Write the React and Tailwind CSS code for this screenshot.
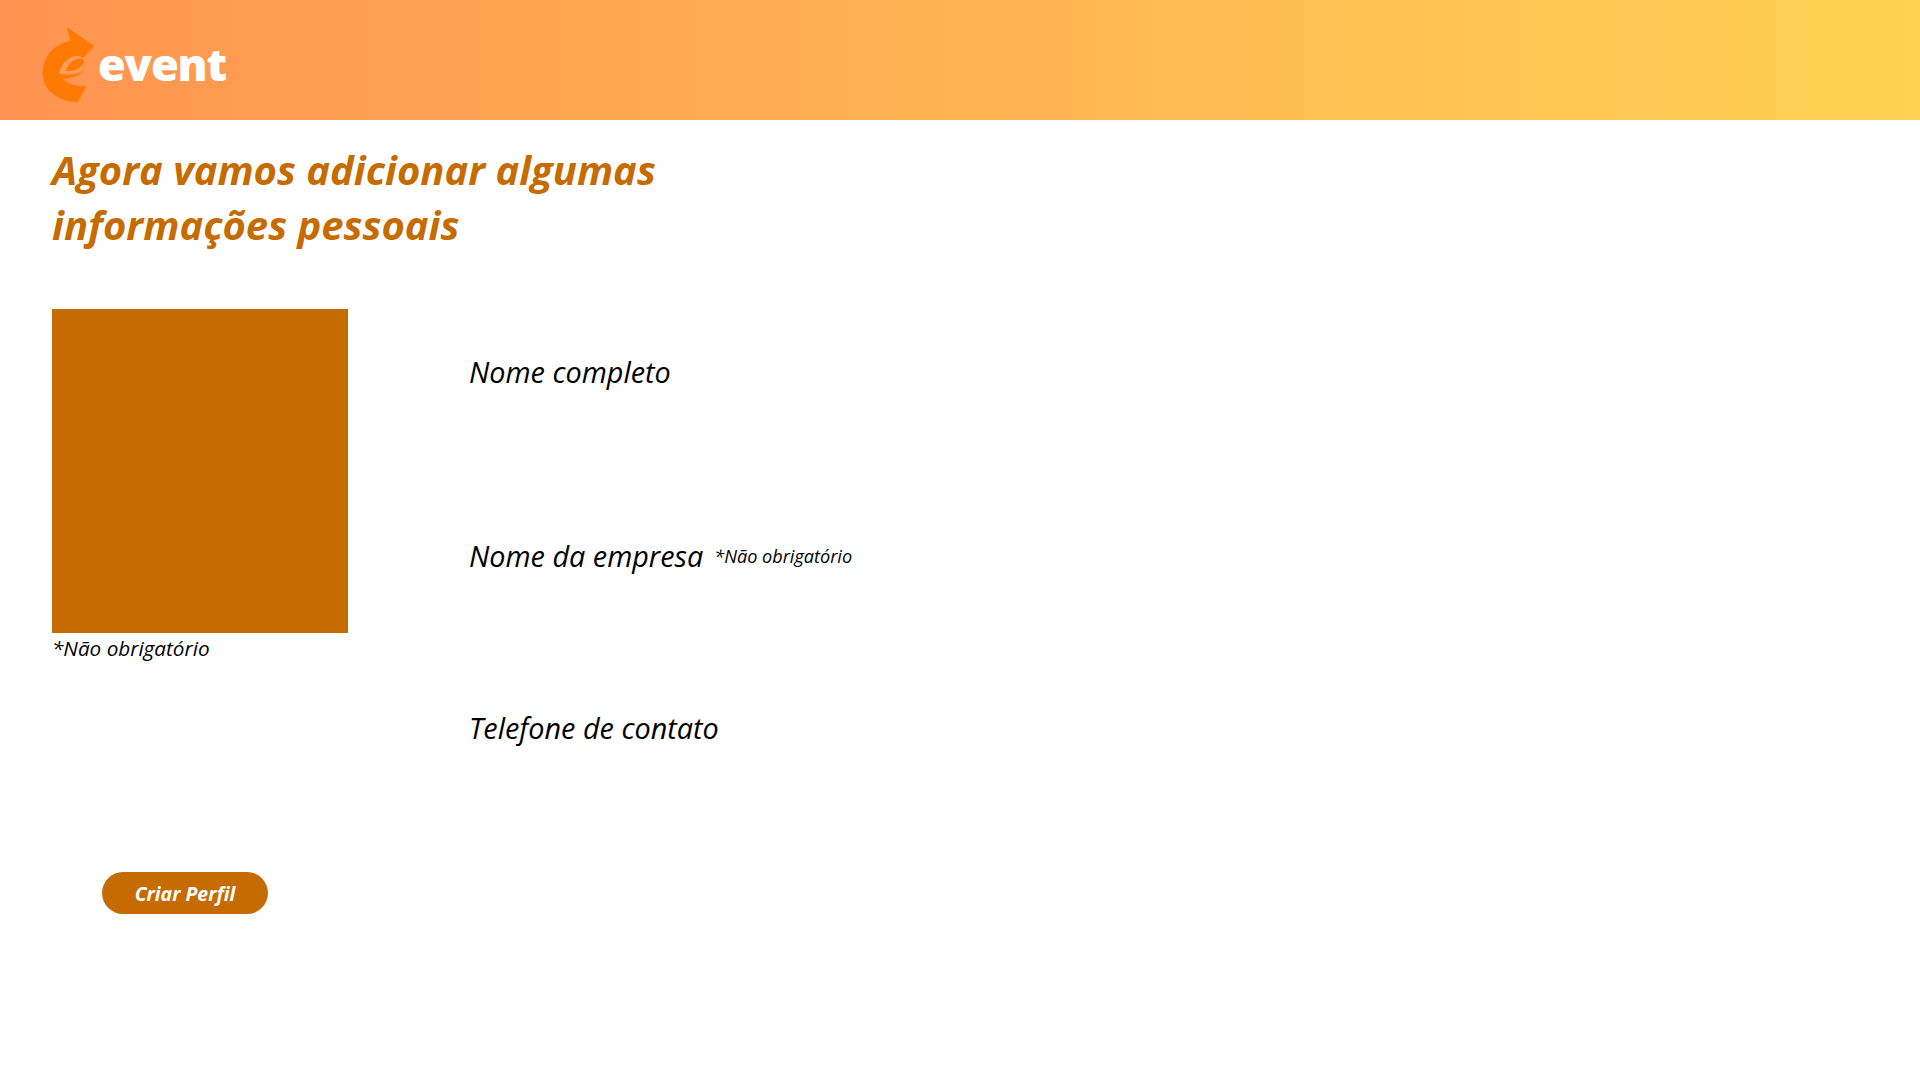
import React from "react";

const Logo = () => (
  <svg width="70" height="90" viewBox="0 0 210 270" className="shrink-0">
    {/* arrow-shaped "e" mark */}
    <path
      fill="#ff7a05"
      d="M93 22 L175 78 L140 116 C150 135 148 152 128 164 C112 173 95 174 80 176 C95 192 125 200 152 198 L125 247 C65 245 20 210 20 160 C20 105 60 70 103 63 Z"
    />
    <path
      fill="#ff9c55"
      d="M70 162 C74 130 98 108 125 108 C132 108 138 111 143 116 C128 115 112 119 102 129 C96 136 91 146 89 153 C100 154 113 152 124 147 C134 143 140 136 144 126 C149 142 141 155 127 160 C110 165 90 163 70 162 Z"
    />
  </svg>
);

const Label = ({ children, note, className }) => (
  <div className={`flex items-center gap-[11px] italic text-black ${className}`}>
    <span className="text-[28.8px] leading-[40px]">{children}</span>
    {note && <span className="text-[18.1px] leading-[26px]">{note}</span>}
  </div>
);

export default function App() {
  return (
    <div className="min-h-screen bg-white font-['Open_Sans',sans-serif]">
      <header className="flex h-[120px] items-start bg-gradient-to-r from-[#ff9351] to-[#ffd252] pl-[36px] pt-[20px]">
        <Logo />
        <span className="-ml-[8px] mt-[19px] text-[45px] font-extrabold leading-[50px] tracking-[-1.2px] text-white">
          event
        </span>
      </header>

      <main className="px-[52px]">
        <h1 className="mt-[22px] w-[700px] text-[40px] font-bold italic leading-[55px] text-[#c66b00]">
          Agora vamos adicionar algumas
          <br />
          informações pessoais
        </h1>

        <div className="mt-[57px] flex">
          <div className="w-[296px]">
            <div className="h-[324px] bg-[#c66b00]" />
            <p className="mt-[1px] text-[20.7px] italic leading-[29px] text-black">*Não obrigatório</p>
            <button className="ml-[50px] mt-[209px] h-[42px] w-[166px] rounded-full bg-[#c66b00] pt-[2px] text-[19.5px] font-bold italic text-white">
              Criar Perfil
            </button>
          </div>

          <div className="ml-[121px]">
            <Label className="mt-[43px]">Nome completo</Label>
            <Label className="mt-[144px]" note="*Não obrigatório">
              Nome da empresa
            </Label>
            <Label className="mt-[132px]">Telefone de contato</Label>
          </div>
        </div>
      </main>
    </div>
  );
}
